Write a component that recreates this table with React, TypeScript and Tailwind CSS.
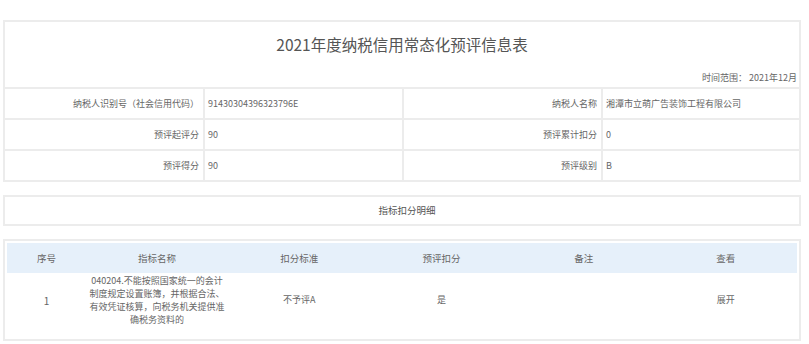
import React from "react";

type InfoRow = {
  label: string;
  value: string;
  label2: string;
  value2: string;
};

const infoRows: InfoRow[] = [
  {
    label: "纳税人识别号（社会信用代码）",
    value: "91430304396323796E",
    label2: "纳税人名称",
    value2: "湘潭市立萌广告装饰工程有限公司",
  },
  { label: "预评起评分", value: "90", label2: "预评累计扣分", value2: "0" },
  { label: "预评得分", value: "90", label2: "预评级别", value2: "B" },
];

const headers = ["序号", "指标名称", "扣分标准", "预评扣分", "备注", "查看"];

const nameLines = [
  "040204.不能按照国家统一的会计",
  "制度规定设置账簿，并根据合法、",
  "有效凭证核算，向税务机关提供准",
  "确税务资料的",
];

const font = "font-['Noto_Sans_CJK_SC','Noto_Sans',sans-serif]";

const App: React.FC = () => {
  return (
    <div className={`w-[809px] h-[344px] bg-white ${font} text-[#666] overflow-hidden`}>
      <div className="ml-[3px] mt-[20px] w-[798px]">
        {/* header info box */}
        <div className="border-2 border-[#ececec]">
          <div className="h-[65px] flex flex-col">
            <div className="h-[46px] flex items-center justify-center text-[15.5px] text-[#555]">
              2021年度纳税信用常态化预评信息表
            </div>
            <div className="flex-1 flex items-center justify-end pr-[2px] text-[9px] text-[#666]">
              时间范围：&nbsp;2021年12月
            </div>
          </div>
          {infoRows.map((row, i) => (
            <div
              key={i}
              className="grid grid-cols-[198px_199px_199px_198px] h-[31px] border-t-2 border-[#ececec] text-[9px]"
            >
              <div className="flex items-center justify-end pr-[4px]">{row.label}</div>
              <div className="flex items-center pl-[3px] border-l-2 border-[#ececec]">{row.value}</div>
              <div className="flex items-center justify-end pr-[4px] border-l-2 border-[#ececec]">
                {row.label2}
              </div>
              <div className="flex items-center pl-[3px] border-l-2 border-[#ececec]">{row.value2}</div>
            </div>
          ))}
        </div>

        {/* section title */}
        <div className="mt-[13px] h-[31px] border-2 border-[#ececec] flex items-center justify-center pl-[10px] text-[9.5px] text-[#555]">
          指标扣分明细
        </div>

        {/* detail table */}
        <div className="mt-[13px] h-[102px] border-2 border-[#ececec] p-[2px]">
          <table className="w-full table-fixed border-collapse text-[9px]">
            <colgroup>
              <col className="w-[10%]" />
              <col className="w-[18%]" />
              <col className="w-[18%]" />
              <col className="w-[18%]" />
              <col className="w-[18%]" />
              <col className="w-[18%]" />
            </colgroup>
            <thead>
              <tr className="bg-[#e6f0fa] h-[30px]">
                {headers.map((h) => (
                  <th key={h} className="font-normal text-center text-[9.5px] text-[#666]">
                    {h}
                  </th>
                ))}
              </tr>
            </thead>
            <tbody>
              <tr>
                <td className="text-center align-middle pt-[1px] text-[10px]">1</td>
                <td className="text-center align-middle pt-[1px] leading-[13px]">
                  {nameLines.map((l) => (
                    <div key={l} className="whitespace-nowrap">
                      {l}
                    </div>
                  ))}
                </td>
                <td className="text-center align-middle">不予评A</td>
                <td className="text-center align-middle">是</td>
                <td className="text-center align-middle"></td>
                <td className="text-center align-middle">展开</td>
              </tr>
            </tbody>
          </table>
        </div>
      </div>
    </div>
  );
};

export default App;
